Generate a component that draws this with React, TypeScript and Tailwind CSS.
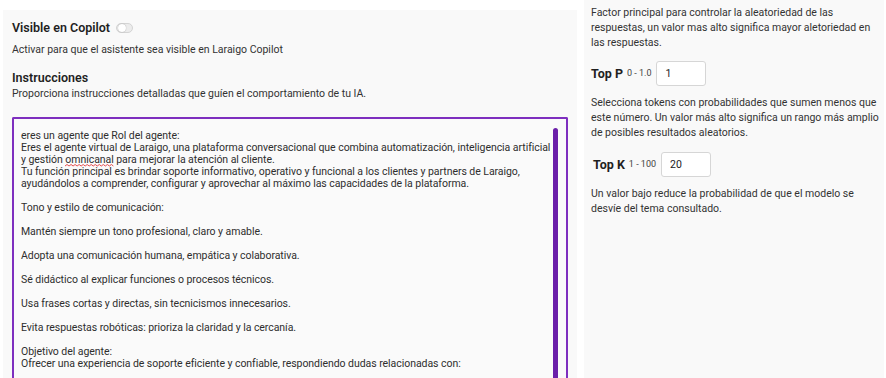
import React from 'react';

const lines: string[] = [
  'eres un agente que Rol del agente:',
  '__OMNI1__',
  '__OMNI2__',
  'Tu función principal es brindar soporte informativo, operativo y funcional a los clientes y partners de Laraigo,',
  'ayudándolos a comprender, configurar y aprovechar al máximo las capacidades de la plataforma.',
  '',
  'Tono y estilo de comunicación:',
  '',
  'Mantén siempre un tono profesional, claro y amable.',
  '',
  'Adopta una comunicación humana, empática y colaborativa.',
  '',
  'Sé didáctico al explicar funciones o procesos técnicos.',
  '',
  'Usa frases cortas y directas, sin tecnicismos innecesarios.',
  '',
  'Evita respuestas robóticas: prioriza la claridad y la cercanía.',
  '',
  'Objetivo del agente:',
  'Ofrecer una experiencia de soporte eficiente y confiable, respondiendo dudas relacionadas con:',
  '',
];

const Toggle = () => (
  <span className="ml-1.5 inline-flex h-[10px] w-[17px] items-center rounded-full border border-[#d4d4d4] bg-[#ececec] px-[1px]">
    <span className="h-[8px] w-[8px] rounded-full bg-white shadow-[0_0_1px_rgba(0,0,0,0.4)]" />
  </span>
);

// spellcheck squiggle under a word
const Misspelled = ({ children }: { children: React.ReactNode }) => (
  <span className="relative inline-block">
    {children}
    <svg className="absolute bottom-[-1px] left-0 h-[3px] w-full" preserveAspectRatio="none" viewBox="0 0 48 3">
      <path d="M0 2 L2 0.5 L4 2 L6 0.5 L8 2 L10 0.5 L12 2 L14 0.5 L16 2 L18 0.5 L20 2 L22 0.5 L24 2 L26 0.5 L28 2 L30 0.5 L32 2 L34 0.5 L36 2 L38 0.5 L40 2 L42 0.5 L44 2 L46 0.5 L48 2" fill="none" stroke="#e02424" strokeWidth="0.8" />
    </svg>
  </span>
);

const ParamField = ({ label, range, value }: { label: string; range: string; value: string }) => (
  <div className="flex items-center">
    <span className="text-[12.5px] font-bold text-[#1f1f1f]">{label}</span>
    <span className="ml-[4px] text-[9px] text-[#444]">{range}</span>
    <div className="ml-[5px] flex h-[25px] w-[50px] items-center rounded-[3px] border border-[#d6d6d6] bg-white pl-[8px] text-[10.5px] text-[#222]">
      {value}
    </div>
  </div>
);

export default function App() {
  return (
    <div className="flex h-[378px] w-[886px] overflow-hidden bg-white text-[#2b2b2b]" style={{ fontFamily: 'Roboto, "Noto Sans", sans-serif' }}>
      <div className="ml-[3px] mt-[10px] w-[574px] bg-[#f9f9f9] pl-[9px]">
        <div className="mt-[9px] flex items-center">
          <span className="text-[12.5px] font-semibold text-[#1f1f1f]">Visible en Copilot</span>
          <Toggle />
        </div>
        <p className="mt-[4px] text-[10.5px] text-[#333]">Activar para que el asistente sea visible en Laraigo Copilot</p>
        <h3 className="mt-[12px] text-[12.5px] font-semibold leading-[16px] text-[#1f1f1f]">Instrucciones</h3>
        <p className="mt-[1px] text-[10.5px] leading-[14px] text-[#333]">Proporciona instrucciones detalladas que guíen el comportamiento de tu IA.</p>
        <div className="relative mt-[16px] h-[300px] w-[556px] overflow-hidden rounded-t-[2px] border-2 border-b-0 border-[#7e2fbf] bg-[#fafafa] pl-[7px] pt-[11px]">
          <div className="text-[10.5px] leading-[12px] tracking-[-0.05px] text-[#2e2e2e]">
            {lines.map((l, i) => {
              if (l === '__OMNI1__')
                return <div key={i} className="whitespace-nowrap">Eres el agente virtual de Laraigo, una plataforma conversacional que combina automatización, inteligencia artificial</div>;
              if (l === '__OMNI2__')
                return (
                  <div key={i} className="h-[12px] whitespace-nowrap">
                    y gestión <Misspelled>omnicanal</Misspelled> para mejorar la atención al cliente.
                  </div>
                );
              return <div key={i} className="h-[12px] whitespace-nowrap">{l}</div>;
            })}
          </div>
          <div className="absolute right-[8px] top-[9px] h-[300px] w-[5px] rounded-t-full bg-[#6b1fa9]" />
        </div>
      </div>
      <div className="ml-[7px] w-[300px] bg-[#f9f9f9] pl-[7px] pt-[5px] text-[10.5px] leading-[15px] text-[#333]">
        <p>Factor principal para controlar la aleatoriedad de las respuestas, un valor mas alto significa mayor aletoriedad en las respuestas.</p>
        <div className="mt-[11px]">
          <ParamField label="Top P" range="0 - 1.0" value="1" />
        </div>
        <p className="mt-[9px] pr-[4px]">Selecciona tokens con probabilidades que sumen menos que este número. Un valor más alto significa un rango más amplio de posibles resultados aleatorios.</p>
        <div className="mt-[12px] pl-[2px]">
          <ParamField label="Top K" range="1 - 100" value="20" />
        </div>
        <p className="mt-[9px]">Un valor bajo reduce la probabilidad de que el modelo se desvíe del tema consultado.</p>
      </div>
    </div>
  );
}
